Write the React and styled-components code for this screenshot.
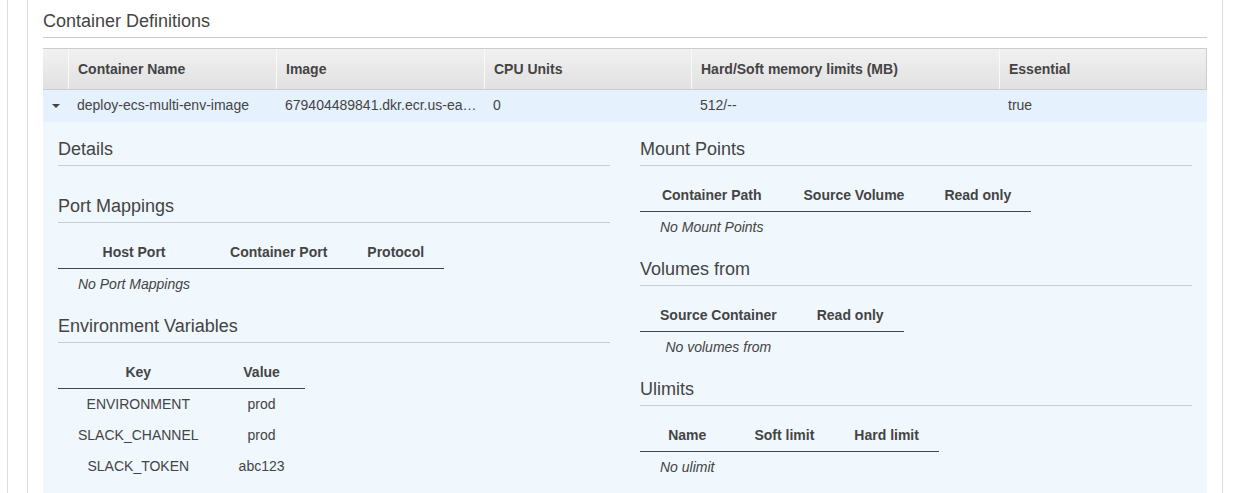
import styled, { createGlobalStyle } from "styled-components";

const GlobalStyle = createGlobalStyle`
  body {
    margin: 0;
    background: #fff;
    font-family: "Liberation Sans", Arial, sans-serif;
    color: #444;
  }
`;

const IMAGE_URI =
  "679404489841.dkr.ecr.us-east-1.amazonaws.com/deploy-ecs-multi-env-image:latest";

const columns = "25px 208px 208px 207px 308px 1fr";

export default function App() {
  return (
    <>
      <GlobalStyle />
      <Shell>
        <Panel>
          <Title>Container Definitions</Title>

          <HeaderRow>
            <HeadCell />
            <HeadCell $divider>Container Name</HeadCell>
            <HeadCell $divider>Image</HeadCell>
            <HeadCell $divider>CPU Units</HeadCell>
            <HeadCell $divider>Hard/Soft memory limits (MB)</HeadCell>
            <HeadCell $divider>Essential</HeadCell>
          </HeaderRow>

          <DataRow>
            <Toggle>
              <Caret />
            </Toggle>
            <Cell>deploy-ecs-multi-env-image</Cell>
            <Cell>{IMAGE_URI}</Cell>
            <Cell>0</Cell>
            <Cell>512/--</Cell>
            <Cell>true</Cell>
          </DataRow>

          <Expanded>
            <Column>
              <Section $empty>
                <SectionTitle>Details</SectionTitle>
              </Section>

              <Section>
                <SectionTitle>Port Mappings</SectionTitle>
                <MiniTable>
                  <thead>
                    <tr>
                      <th>Host Port</th>
                      <th>Container Port</th>
                      <th>Protocol</th>
                    </tr>
                  </thead>
                  <tbody>
                    <tr>
                      <EmptyCell>No Port Mappings</EmptyCell>
                    </tr>
                  </tbody>
                </MiniTable>
              </Section>

              <Section>
                <SectionTitle>Environment Variables</SectionTitle>
                <MiniTable>
                  <thead>
                    <tr>
                      <th>Key</th>
                      <th>Value</th>
                    </tr>
                  </thead>
                  <tbody>
                    <tr>
                      <td>ENVIRONMENT</td>
                      <td>prod</td>
                    </tr>
                    <tr>
                      <td>SLACK_CHANNEL</td>
                      <td>prod</td>
                    </tr>
                    <tr>
                      <td>SLACK_TOKEN</td>
                      <td>abc123</td>
                    </tr>
                  </tbody>
                </MiniTable>
              </Section>
            </Column>

            <Column>
              <Section>
                <SectionTitle>Mount Points</SectionTitle>
                <MiniTable>
                  <thead>
                    <tr>
                      <th>Container Path</th>
                      <th>Source Volume</th>
                      <th>Read only</th>
                    </tr>
                  </thead>
                  <tbody>
                    <tr>
                      <EmptyCell>No Mount Points</EmptyCell>
                    </tr>
                  </tbody>
                </MiniTable>
              </Section>

              <Section>
                <SectionTitle>Volumes from</SectionTitle>
                <MiniTable>
                  <thead>
                    <tr>
                      <th>Source Container</th>
                      <th>Read only</th>
                    </tr>
                  </thead>
                  <tbody>
                    <tr>
                      <EmptyCell>No volumes from</EmptyCell>
                    </tr>
                  </tbody>
                </MiniTable>
              </Section>

              <Section>
                <SectionTitle>Ulimits</SectionTitle>
                <MiniTable>
                  <thead>
                    <tr>
                      <th>Name</th>
                      <th>Soft limit</th>
                      <th>Hard limit</th>
                    </tr>
                  </thead>
                  <tbody>
                    <tr>
                      <EmptyCell>No ulimit</EmptyCell>
                    </tr>
                  </tbody>
                </MiniTable>
              </Section>
            </Column>
          </Expanded>
        </Panel>
      </Shell>
    </>
  );
}

const Shell = styled.div`
  margin-left: 7px;
  padding-left: 19px;
  border-left: 1px solid #ddd;
  min-height: 493px;
  box-sizing: border-box;
`;

const Panel = styled.div`
  width: 1196px;
  box-sizing: border-box;
  min-height: 493px;
  padding: 11px 15px 0;
  border-left: 1px solid #ddd;
  border-right: 1px solid #ddd;
`;

const Title = styled.h2`
  margin: 0 0 10px;
  padding-bottom: 6px;
  border-bottom: 1px solid #ccc;
  font-size: 18px;
  line-height: 20px;
  font-weight: normal;
  color: #444;
`;

const HeaderRow = styled.div`
  display: grid;
  grid-template-columns: ${columns};
  height: 42px;
  box-sizing: border-box;
  border-top: 1px solid #ccc;
  border-bottom: 1px solid #ccc;
  border-right: 1px solid #ccc;
  background: linear-gradient(to bottom, #f1f1f1, #e1e1e1);
`;

const HeadCell = styled.div`
  display: flex;
  align-items: center;
  padding-left: 9px;
  font-size: 14px;
  font-weight: bold;
  color: #444;
  white-space: nowrap;
  border-left: ${(p) => (p.$divider ? "1px solid #fafafa" : "none")};
`;

const DataRow = styled.div`
  display: grid;
  grid-template-columns: ${columns};
  height: 32px;
  background: #e5f1fc;
`;

const Toggle = styled.div`
  display: flex;
  align-items: center;
  justify-content: center;
`;

const Caret = styled.span`
  width: 0;
  height: 0;
  border-left: 4px solid transparent;
  border-right: 4px solid transparent;
  border-top: 4px solid #444;
`;

const Cell = styled.div`
  min-width: 0;
  padding: 0 3px 0 9px;
  font-size: 14px;
  line-height: 30px;
  color: #444;
  white-space: nowrap;
  overflow: hidden;
  text-overflow: ellipsis;
`;

const Expanded = styled.div`
  display: grid;
  grid-template-columns: 1fr 1fr;
  column-gap: 30px;
  align-items: start;
  padding: 17px 15px 12px;
  background: #f0f7fd;
`;

const Column = styled.div`
  display: flex;
  flex-direction: column;
`;

const Section = styled.section`
  margin-bottom: ${(p) => (p.$empty ? "30px" : "16px")};
`;

const SectionTitle = styled.h3`
  margin: 0;
  padding-bottom: 6px;
  border-bottom: 1px solid #ccc;
  font-size: 18px;
  line-height: 20px;
  font-weight: normal;
  color: #444;
`;

const MiniTable = styled.table`
  margin-top: 11px;
  border-collapse: collapse;
  font-size: 14px;
  color: #444;

  th {
    padding: 8px 20px 6px;
    line-height: 20px;
    font-weight: bold;
    text-align: center;
    white-space: nowrap;
    border-bottom: 1px solid #444;
  }

  td {
    padding: 5px 20px;
    line-height: 21px;
    text-align: center;
    white-space: nowrap;
  }
`;

const EmptyCell = styled.td`
  font-style: italic;
`;
